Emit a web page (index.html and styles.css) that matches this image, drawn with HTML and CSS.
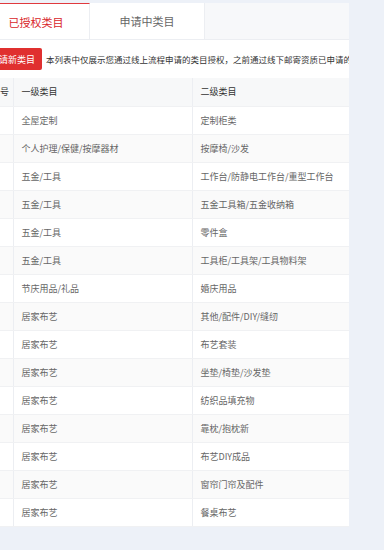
FILE: index.html
```html
<!DOCTYPE html>
<html>
<head>
  <meta charset="utf-8">
  <link rel="stylesheet" href="styles.css">
</head>
<body>
  <div class="panel">
    <div class="tabs">
      <div class="tab active">已授权类目</div>
      <div class="tab">申请中类目</div>
    </div>
    <div class="toolbar">
      <button class="apply-btn">申请新类目</button>
      <span class="notice">本列表中仅展示您通过线上流程申请的类目授权，之前通过线下邮寄资质已申请的类目授权请联系客服查询</span>
    </div>
    <table class="cat-table">
      <colgroup>
        <col class="col-no">
        <col class="col-first">
        <col class="col-second">
      </colgroup>
      <thead>
        <tr><th>序号</th><th>一级类目</th><th>二级类目</th></tr>
      </thead>
      <tbody>
        <tr><td>1</td><td>全屋定制</td><td>定制柜类</td></tr>
        <tr><td>2</td><td>个人护理/保健/按摩器材</td><td>按摩椅/沙发</td></tr>
        <tr><td>3</td><td>五金/工具</td><td>工作台/防静电工作台/重型工作台</td></tr>
        <tr><td>4</td><td>五金/工具</td><td>五金工具箱/五金收纳箱</td></tr>
        <tr><td>5</td><td>五金/工具</td><td>零件盒</td></tr>
        <tr><td>6</td><td>五金/工具</td><td>工具柜/工具架/工具物料架</td></tr>
        <tr><td>7</td><td>节庆用品/礼品</td><td>婚庆用品</td></tr>
        <tr><td>8</td><td>居家布艺</td><td>其他/配件/DIY/缝纫</td></tr>
        <tr><td>9</td><td>居家布艺</td><td>布艺套装</td></tr>
        <tr><td>10</td><td>居家布艺</td><td>坐垫/椅垫/沙发垫</td></tr>
        <tr><td>11</td><td>居家布艺</td><td>纺织品填充物</td></tr>
        <tr><td>12</td><td>居家布艺</td><td>靠枕/抱枕新</td></tr>
        <tr><td>13</td><td>居家布艺</td><td>布艺DIY成品</td></tr>
        <tr><td>14</td><td>居家布艺</td><td>窗帘门帘及配件</td></tr>
        <tr><td>15</td><td>居家布艺</td><td>餐桌布艺</td></tr>
      </tbody>
    </table>
  </div>
</body>
</html>
```

FILE: styles.css
```css
body {
  margin: 0;
  padding-top: 3px;
  background: #edf1f8;
  font-family: "Noto Sans CJK SC", "Noto Sans", sans-serif;
  overflow: hidden;
}

/* panel is scrolled a bit to the right, so its left edge is clipped */
.panel {
  width: 366px;
  margin-left: -17px;
  background: #fff;
}

.tabs {
  display: flex;
  height: 36px;
  background: #f7f8fa;
  border-bottom: 1px solid #eceef2;
}

.tab {
  width: 115px;
  display: flex;
  align-items: center;
  justify-content: center;
  font-size: 11px;
  color: #666;
  background: #fff;
  border-right: 1px solid #eceef2;
  box-sizing: border-box;
}

.tab.active {
  width: 107px;
  color: #d9262b;
  border-top: 1px solid #e0393e;
}

.toolbar {
  display: flex;
  align-items: center;
  gap: 4px;
  height: 38px;
  overflow: hidden;
}

.apply-btn {
  height: 22px;
  padding: 0 7px;
  border: none;
  border-radius: 2px;
  background: #e0302f;
  color: #fff;
  font-family: inherit;
  font-size: 9px;
  flex-shrink: 0;
}

.notice {
  font-size: 8.5px;
  color: #333;
  white-space: nowrap;
}

.cat-table {
  width: 366px;
  border-collapse: collapse;
  table-layout: fixed;
}

.col-no { width: 30px; }
.col-first { width: 179px; }
.col-second { width: 157px; }

.cat-table th,
.cat-table td {
  height: 28px;
  padding: 0 8px;
  text-align: left;
  font-size: 9px;
  font-weight: normal;
  color: #666;
  border-bottom: 1px solid #f0f1f3;
  border-left: 1px solid #eceef2;
  box-sizing: border-box;
  white-space: nowrap;
  overflow: hidden;
}

.cat-table th {
  color: #333;
  background: #f7f8f9;
}

.cat-table th:first-child,
.cat-table td:first-child {
  border-left: none;
}

.cat-table td:first-child {
  padding-left: 3px;
}

.cat-table tbody tr:nth-child(even) td {
  background: #fafafa;
}
```
